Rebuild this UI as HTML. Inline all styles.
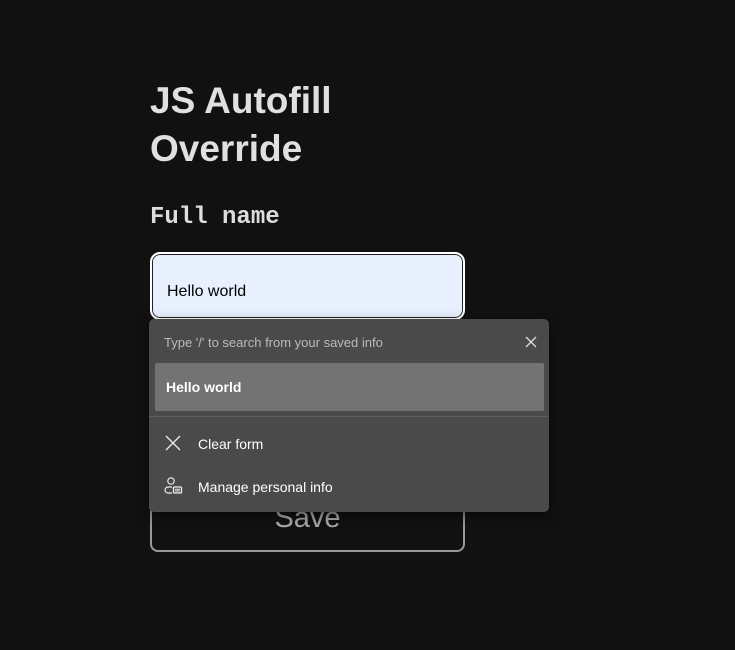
<!DOCTYPE html>
<html><head><style>
body{margin:0;background:#111;width:735px;height:650px;overflow:hidden;position:relative;font-family:"Liberation Sans",sans-serif}
h1{position:absolute;left:150px;top:77px;margin:0;font-size:37px;line-height:48px;color:#e0e0e0;font-weight:bold}
.lbl{position:absolute;left:150px;top:204px;font-family:"Liberation Mono",monospace;font-weight:bold;font-size:24px;color:#ddd}
.inp{position:absolute;left:150px;top:252px;width:311px;height:64px;border:2px solid #fff;border-radius:10px;background:#e8f0fe;box-sizing:content-box;box-shadow:inset 0 0 0 1px #222}
.inp span{position:absolute;left:15px;top:29px;font-size:16px;color:#000}
.save{position:absolute;left:150px;top:440px;width:311px;height:108px;border:2px solid #999;border-radius:8px}
.save span{position:absolute;left:0;right:0;top:60px;text-align:center;font-size:29px;color:#aaa}
.pop{position:absolute;left:149px;top:319px;width:400px;height:193px;background:#4a4a4a;border-radius:5px;box-shadow:0 4px 12px rgba(0,0,0,.5)}
.hd{position:absolute;left:15px;top:16px;font-size:13px;color:#bbb}
.sel{position:absolute;left:6px;top:44px;width:389px;height:48px;background:#737373;border-radius:2px}
.sel span{position:absolute;left:11px;top:16px;font-size:14px;font-weight:bold;color:#fff}
.div{position:absolute;left:0;right:0;top:97px;height:1px;background:#5e5e5e}
.it{position:absolute;left:49px;font-size:14px;color:#fff}
svg{position:absolute}
</style></head><body>
<h1>JS Autofill<br>Override</h1>
<div class="lbl">Full name</div>
<div class="save"><span>Save</span></div>
<div class="inp"><span>Hello world</span></div>
<div class="pop">
<div class="hd">Type '/' to search from your saved info</div>
<svg style="left:376px;top:17px" width="12" height="12"><path d="M1 1L11 11M11 1L1 11" stroke="#ddd" stroke-width="1.3"/></svg>
<div class="sel"><span>Hello world</span></div>
<div class="div"></div>
<svg style="left:16px;top:116px" width="16" height="16"><path d="M1 1L15 15M15 1L1 15" stroke="#eee" stroke-width="1.3"/></svg>
<div class="it" style="top:117px">Clear form</div>
<svg style="left:15px;top:157px" width="20" height="20"><circle cx="7" cy="5" r="3.2" fill="none" stroke="#eee" stroke-width="1.2"/><path d="M8 11H4a3 3 0 0 0 0 6h4" fill="none" stroke="#eee" stroke-width="1.2"/><rect x="9.5" y="11" width="8" height="6" rx="1" fill="none" stroke="#eee" stroke-width="1.3"/><path d="M11 13.3h5M11 15h5" stroke="#eee"/></svg>
<div class="it" style="top:160px">Manage personal info</div>
</div>
</body></html>
